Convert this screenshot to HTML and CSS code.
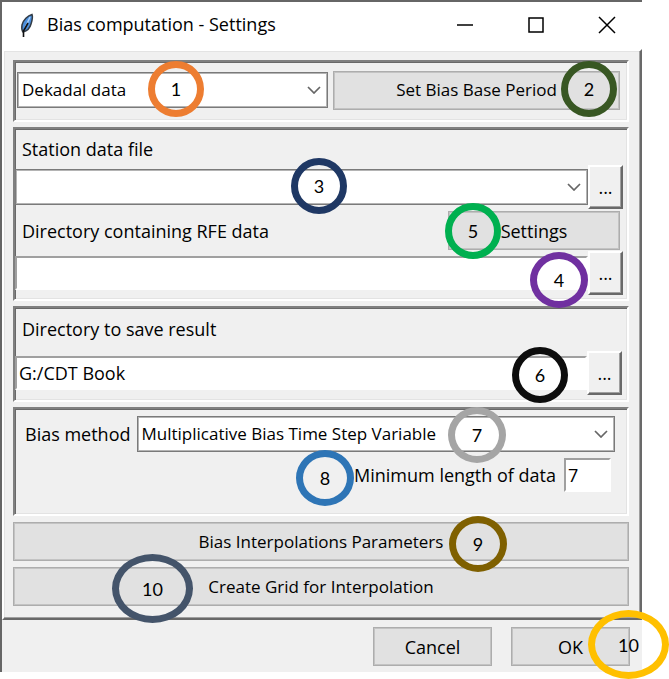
FILE: index.html
```html
<!DOCTYPE html>
<html lang="en">
<head>
<meta charset="utf-8">
<title>Bias computation - Settings</title>
<link rel="stylesheet" href="styles.css">
</head>
<body>
<div class="stage">
<main class="window">
  <header class="titlebar">
    <svg class="feather" viewBox="0 0 16 26" aria-hidden="true">
      <path d="M13 1.500C9 2.500 4 7 3 12c-.5 3-.5 5 1 7 4-1 7-4 8-8 1-3 2-7 1-9.500Z" fill="#4b8fdd" stroke="#333c46" stroke-width="1.500"/>
      <path d="M11 4 6 15" stroke="#a9d0fa" stroke-width="1.500" fill="none"/>
      <path d="M9 10 4.500 18v6" stroke="#111" stroke-width="1.600" fill="none"/>
    </svg>
    <h1 class="title">Bias computation - Settings</h1>
    <button class="caption" aria-label="Minimize"><svg viewBox="0 0 16 16"><path d="M0 8h16"/></svg></button>
    <button class="caption" aria-label="Maximize"><svg viewBox="0 0 16 16"><path d="M1 1h14v14H1z"/></svg></button>
    <button class="caption" aria-label="Close"><svg viewBox="0 0 16 16"><path d="M0 0l16 16M16 0 0 16"/></svg></button>
  </header>

  <form class="panel">
    <section class="group period">
      <div class="combo">
        <select aria-label="Time step"><option>Dekadal data</option></select>
        <svg class="chevron" viewBox="0 0 14 8"><path d="M1 1l6 6 6-6"/></svg>
      </div>
      <button type="button" class="btn">Set Bias Base Period</button>
    </section>

    <section class="group sources">
      <label class="label" for="station">Station data file</label>
      <div class="row">
        <div class="combo">
          <select id="station"><option></option></select>
          <svg class="chevron" viewBox="0 0 14 8"><path d="M1 1l6 6 6-6"/></svg>
        </div>
        <button type="button" class="browse" aria-label="Browse station file">...</button>
      </div>
      <div class="row split">
        <label class="label" for="rfe">Directory containing RFE data</label>
        <button type="button" class="btn settings">Settings</button>
      </div>
      <div class="row">
        <input class="entry" id="rfe" type="text">
        <button type="button" class="browse" aria-label="Browse RFE directory">...</button>
      </div>
    </section>

    <section class="group output">
      <label class="label" for="out">Directory to save result</label>
      <div class="row">
        <input class="entry" id="out" type="text" value="G:/CDT Book">
        <button type="button" class="browse" aria-label="Browse output directory">...</button>
      </div>
    </section>

    <section class="group method">
      <div class="row">
        <label class="label" for="method">Bias method</label>
        <div class="combo">
          <select id="method"><option>Multiplicative Bias Time Step Variable</option></select>
          <svg class="chevron" viewBox="0 0 14 8"><path d="M1 1l6 6 6-6"/></svg>
        </div>
      </div>
      <div class="row length">
        <label for="minlen">Minimum length of data</label>
        <input class="entry short" id="minlen" type="text" value="7">
      </div>
    </section>

    <button type="button" class="btn wide">Bias Interpolations Parameters</button>
    <button type="button" class="btn wide">Create Grid for Interpolation</button>
  </form>

  <footer class="actions">
    <button type="button" class="btn">Cancel</button>
    <button type="button" class="btn">OK</button>
  </footer>
</main>
<span class="mark m1">1</span>
<span class="mark m2">2</span>
<span class="mark m3">3</span>
<span class="mark m4">4</span>
<span class="mark m5">5</span>
<span class="mark m6">6</span>
<span class="mark m7">7</span>
<span class="mark m8">8</span>
<span class="mark m9">9</span>
<span class="mark oval m10">10</span>
<span class="mark oval m11">10</span>
</div>
</body>
</html>
```
FILE: styles.css
```css
* { box-sizing: border-box; }
body { margin: 0; background: #fff; color: #000; font: 18px/24px "Open Sans", "Noto Sans", sans-serif; }
button, input, select { font: inherit; color: inherit; margin: 0; border-radius: 0; }
.stage { position: relative; padding: 0 27px 7px 0; }
.window { background: #f0f0f0; border-top: 2px solid #666; border-left: 2px solid #666; }

.titlebar { display: flex; align-items: center; height: 47px; padding-left: 17px; background: #fff; }
.feather { width: 16px; height: 26px; margin-right: 12px; }
.title { flex: 1; margin: 0; padding-bottom: 3px; font-size: 18px; font-weight: 400; }
.caption { display: flex; align-items: center; justify-content: center; width: 71px; height: 46px; padding: 0 0 2px; border: 0; background: none; }
.caption svg { width: 16px; height: 16px; overflow: visible; fill: none; stroke: #000; stroke-width: 1.500; }

.panel { display: flex; flex-direction: column; gap: 5px; padding: 9px 11px 12px 9px; border: 2px solid; border-color: #fff #696969 #696969 #fff; box-shadow: inset -1px -1px #a0a0a0, inset 1px 1px #e3e3e3; }
.group { border: 2px solid; border-color: #808080 #fff #fff #808080; box-shadow: inset 1px 1px #696969, inset -1px -1px #e3e3e3; }
.row { display: flex; align-items: center; }
.label { display: block; padding-left: 7px; white-space: nowrap; }

.combo { position: relative; flex: 1; height: 36px; }
.combo select { appearance: none; width: 100%; height: 36px; padding: 0 30px 0 4px; border: 1px solid #7a7a7a; box-shadow: inset 0 0 0 1px #b4b4b4; background: #fff; font-size: 17px; }
.chevron { position: absolute; right: 7px; top: 14px; width: 14px; height: 8px; fill: none; stroke: #666; stroke-width: 1.700; pointer-events: none; }

.btn { height: 39px; padding: 0 8px; border: 1px solid #adadad; box-shadow: inset 0 0 0 1px #c3c3c3; background: #e1e1e1; }
.browse { width: 35px; height: 44px; padding: 0; border: 2px solid; border-color: #fff #696969 #696969 #fff; background: #f0f0f0; box-shadow: inset -1px -1px #a0a0a0; }
.entry { flex: 1; min-width: 0; height: 34px; padding: 0 2px; border: 2px solid; border-color: #a0a0a0 #fff #fff #a0a0a0; background: #fff; }

.period { display: flex; align-items: center; gap: 5px; height: 62px; padding: 0 7px 2px 2px; }
.period .btn { flex: 0 0 287px; font-size: 17px; }
.sources { height: 174px; padding: 6px 4px 0 0; }
.sources .label { line-height: 28px; }
.sources > .label { margin-bottom: 2px; }
.split { justify-content: space-between; padding: 2px 3px 1px 0; }
.settings { width: 172px; }
.output { height: 96px; padding: 7px 5px 0 0; }
.output .label { line-height: 28px; margin-bottom: 8px; }
.method { height: 109px; padding: 7px 12px 0 4px; }
.method .label { padding: 0 6px 0 6px; }
.length { justify-content: flex-end; gap: 8px; padding: 6px 4px 0 0; }
.short { flex: 0 0 47px; }
.wide { width: 100%; margin-top: 1px; font-size: 17px; }

.actions { display: flex; justify-content: flex-end; gap: 19px; padding: 7px 12px 6px; }
.actions .btn { width: 119px; }

.mark { position: absolute; display: flex; align-items: center; justify-content: center; width: 56px; height: 56px; border: 7px solid; border-radius: 50%; font: 18px/24px Lato, sans-serif; -webkit-text-fill-color: #000; }
.oval { width: 81px; height: 69px; }
.m1 { left: 148px; top: 61px; color: #ed7d31; }
.m2 { right: 52px; top: 61px; color: #385723; }
.m3 { left: 291px; top: 158px; color: #1f3864; }
.m4 { right: 81px; top: 252px; width: 58px; color: #7030a0; }
.m5 { right: 168px; top: 203px; color: #00b050; }
.m6 { right: 101px; top: 347px; color: #0d0d0d; }
.m7 { right: 163px; top: 407px; width: 58px; color: #a5a5a5; }
.m8 { right: 315px; top: 450px; width: 58px; color: #2e75b6; }
.m9 { right: 162px; top: 516px; width: 58px; color: #7f6000; }
.m10 { left: 112px; top: 554px; color: #44546a; }
.m11 { right: 0; top: 610px; color: #ffc000; }
```
